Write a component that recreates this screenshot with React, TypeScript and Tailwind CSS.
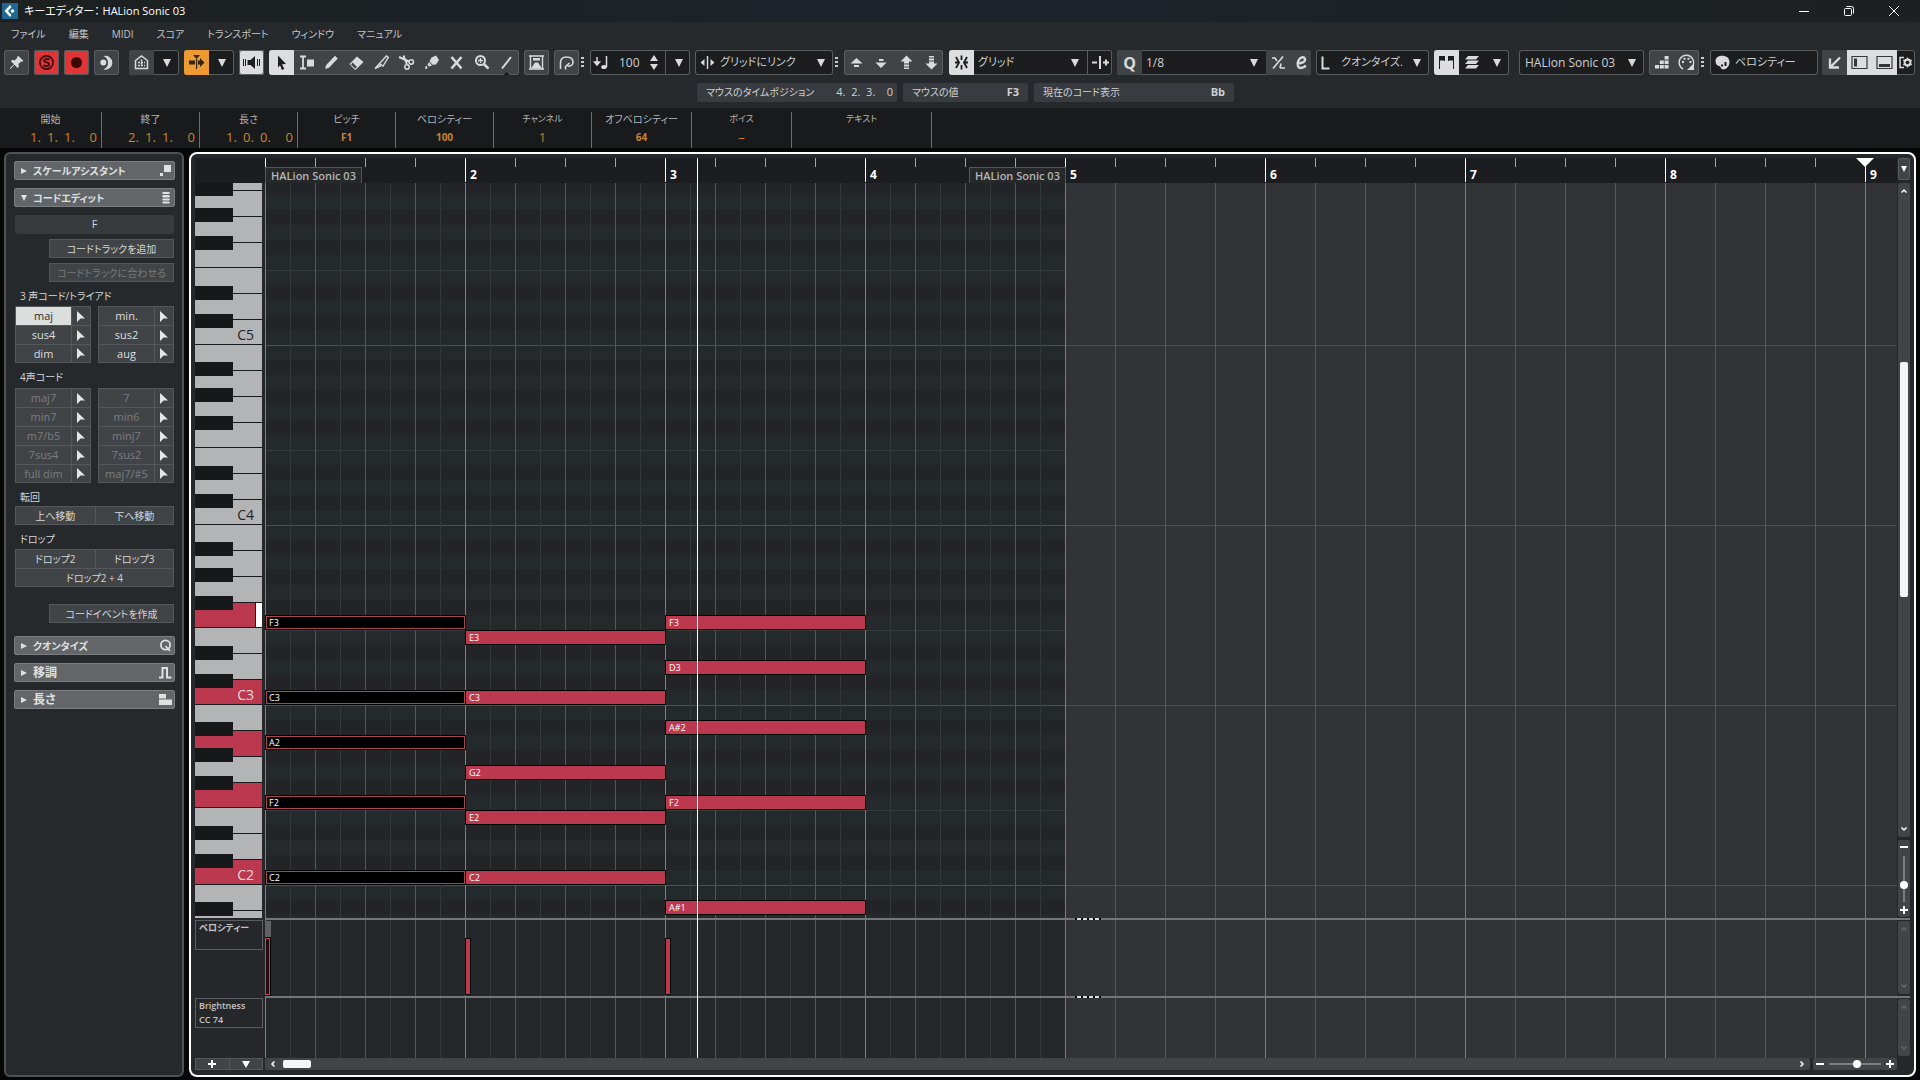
import { useState, type ReactNode } from 'react';

// one semitone row is 15px, one octave 180px, one bar 200px
const ROW = 15;
const BEAT = 50;
const TOP_C = 6;
const OCTAVES = [5, 4, 3, 2, 1];

const WHITE_KEYS = [
  { name: 'B', size: 'h-[26px]' },
  { name: 'A', size: 'h-[26px]' },
  { name: 'G', size: 'h-[26px]' },
  { name: 'F', size: 'h-[25px]' },
  { name: 'E', size: 'h-[26px]' },
  { name: 'D', size: 'h-[26px]' },
  { name: 'C', size: 'h-[25px]' },
];
const BLACK_KEYS = ['top-[17px]', 'top-[43px]', 'top-[71px]', 'top-[121px]', 'top-[149px]'];
const PITCHES = ['B', 'A#', 'A', 'G#', 'G', 'F#', 'F', 'E', 'D#', 'D', 'C#', 'C'];
const PRESSED = ['F3', 'C3', 'A2', 'F2', 'C2'];

const NOTES = [
  { bar: 0, selected: true, pitches: ['F3', 'C3', 'A2', 'F2', 'C2'] },
  { bar: 1, selected: false, pitches: ['E3', 'C3', 'G2', 'E2', 'C2'] },
  { bar: 2, selected: false, pitches: ['F3', 'D3', 'A#2', 'F2', 'A#1'] },
];

const MENU = ['ファイル', '編集', 'MIDI', 'スコア', 'トランスポート', 'ウィンドウ', 'マニュアル'];

const TRIADS = ['maj', 'min.', 'sus4', 'sus2', 'dim', 'aug'];
const SEVENTHS = ['maj7', '7', 'min7', 'min6', 'm7/b5', 'minj7', '7sus4', '7sus2', 'full dim', 'maj7/#5'];

function pitchTop(pitch: string) {
  const octave = Number(pitch.slice(-1));
  const index = PITCHES.indexOf(pitch.slice(0, -1));
  return ((TOP_C - 1 - octave) * 12 + index) * ROW;
}

/* ---------- toolbar ---------- */

function Icon({ children }: { children: ReactNode }) {
  return (
    <svg viewBox="0 0 25 25" width="25" height="25" fill="currentColor" className="shrink-0" aria-hidden="true">
      {children}
    </svg>
  );
}

function Tool({ label, className = '', children }: { label: string; className?: string; children: ReactNode }) {
  return (
    <button aria-label={label} className={`flex h-full w-[25px] shrink-0 items-center justify-center overflow-hidden ${className}`}>
      {children}
    </button>
  );
}

function Group({ className = '', children }: { className?: string; children: ReactNode }) {
  return (
    <div className={`flex h-[25px] shrink-0 items-center overflow-hidden rounded-[3px] text-[#d9dadb] ring-1 ring-inset ring-[#5a5d60] ${className}`}>
      {children}
    </div>
  );
}

function Down() {
  return (
    <svg viewBox="0 0 25 25" width="25" height="25" fill="currentColor" className="pointer-events-none shrink-0" aria-hidden="true">
      <path d="M9 9h8l-4 8z" />
    </svg>
  );
}

function Dots() {
  return (
    <svg viewBox="0 0 11 25" width="11" height="25" fill="#c9cacb" className="-ml-[5px] shrink-0" aria-hidden="true">
      <path d="M2 7h3v2H2zM2 11h3v2H2zM2 15h3v2H2z" />
    </svg>
  );
}

function Picker({ label, value, className = 'text-[11px]' }: { label: string; value: string; className?: string }) {
  return (
    <select aria-label={label} className={`h-full min-w-0 flex-1 appearance-none bg-transparent text-[#cfd0d1] outline-none ${className}`}>
      <option>{value}</option>
    </select>
  );
}

function Toolbar() {
  const [tempo, setTempo] = useState('100');

  return (
    <div className="flex h-[33px] items-center overflow-hidden pl-1">
      <Group className="mr-[5px] bg-[#414447]">
        <Tool label="ピン">
          <Icon><path d="M14.500 6l5 5-1.500.8-1-.3-2.500 2.500.3 2.700-1.200 1.200-3.100-3.100L6.500 19l-.7-.7 4.200-4-3.100-3.100 1.200-1.200 2.700.3 2.500-2.500-.3-1z" /></Icon>
        </Tool>
      </Group>
      <Group className="mr-[5px] bg-[#e03437]">
        <Tool label="ソロ" className="text-[#3a0809]">
          <Icon>
            <circle cx="12.500" cy="12.500" r="6.600" fill="none" stroke="currentColor" strokeWidth="1.600" />
            <path d="M15.300 9.800c-.8-1-5.300-1.300-5.300.8 0 2.300 5.200 1.400 5.200 3.800 0 2.100-4.500 2-5.500.7" fill="none" stroke="currentColor" strokeWidth="1.800" />
          </Icon>
        </Tool>
      </Group>
      <Group className="mr-[5px] bg-[#e03437]">
        <Tool label="録音" className="text-[#3a0809]">
          <Icon><circle cx="12.500" cy="12.500" r="5.500" /></Icon>
        </Tool>
      </Group>
      <Group className="mr-[5px] bg-[#414447]">
        <Tool label="レトロスペクティブ録音">
          <Icon>
            <circle cx="9.300" cy="12.500" r="3" />
            <path d="M9.500 6a7 7 0 1 1 0 13.500c3-1.200 4.500-3.700 4.500-6.700s-1.500-5.500-4.500-6.800z" />
          </Icon>
        </Tool>
      </Group>
      <Group className="ml-[5px] mr-[5px] bg-[#1b1d1f]">
        <Tool label="編集モード" className="bg-[#414447]">
          <Icon>
            <path d="M6.500 18.500v-8l6-4.500 6 4.500v8z" fill="none" stroke="currentColor" strokeWidth="1.500" />
            <path d="M9 12.500h7M12.500 9.500v6M9 15.500h7" stroke="currentColor" strokeWidth="1.500" strokeDasharray="2 1" />
          </Icon>
        </Tool>
        <Tool label="編集モードを開く"><Down /></Tool>
      </Group>
      <Group className="mr-[5px] bg-[#1b1d1f]">
        <Tool label="オートスクロール" className="bg-[#ee9a32] text-[#33250f]">
          <Icon><path d="M5 10.500h6v4H5zM14 10.500h2V8l4.500 4.500L16 17v-2.500h-2zM12 9h1.200v10H12zM9 5h7l-3.500 4z" /></Icon>
        </Tool>
        <Tool label="オートスクロール設定"><Down /></Tool>
      </Group>
      <Group className="mr-[5px] bg-[#dcddde]">
        <Tool label="試聴" className="text-[#1b1d1f]">
          <Icon>
            <path d="M8.500 10h3L16 6v13l-4.500-4h-3z" />
            <path d="M4.500 9v7M6.500 9v7M18.500 9v7M20.500 9v7" stroke="currentColor" strokeWidth="1" />
          </Icon>
        </Tool>
      </Group>
      <Group className="mr-[5px] bg-[#414447]">
        <Tool label="オブジェクト選択" className="bg-[#dcddde] text-[#1b1d1f]">
          <Icon><path d="M9 5.500l8 8.500-4 .3 2.300 4.700-2.300 1-2-4.700-2 2.200z" /></Icon>
        </Tool>
        <Tool label="範囲選択">
          <Icon>
            <path d="M6 6.500h6M6 18.500h6M9 6.500v12" fill="none" stroke="currentColor" strokeWidth="1.800" />
            <path d="M13 9.500h7v7h-7z" />
          </Icon>
        </Tool>
        <Tool label="鉛筆">
          <Icon><path d="M6 19l1.200-4L16 5.800l2.800 2.700L10 17.700z" /></Icon>
        </Tool>
        <Tool label="消しゴム">
          <Icon>
            <path d="M5.500 14L13 6.500l6.500 5.500-7.500 7.500h-1.500z" />
            <path d="M8.500 12.500l4.500 4.500-2 1.500-4-4z" fill="#414447" />
          </Icon>
        </Tool>
        <Tool label="トリム">
          <Icon><path d="M6 18.500L17.500 6l1.800 1.500-5.300 8.500-3-2M6 18.500l6-3" fill="none" stroke="currentColor" strokeWidth="1.400" /></Icon>
        </Tool>
        <Tool label="はさみ">
          <Icon>
            <path d="M5 7l10 4.500M9.500 5.500l3.500 9" fill="none" stroke="currentColor" strokeWidth="2" />
            <circle cx="17.300" cy="12" r="2.200" fill="none" stroke="currentColor" strokeWidth="1.500" />
            <circle cx="13" cy="17" r="2.200" fill="none" stroke="currentColor" strokeWidth="1.500" />
          </Icon>
        </Tool>
        <Tool label="のり">
          <Icon><path d="M12.500 7.500L17 5.500l3 4.500-3 4.500-3.500.3-3-3.500zM10 12l3 3.500-3 1-1.500-1.800zM7.500 15.500c1 1.300 1.300 3-.2 3.500-1.500 0-1.800-1.500.2-3.500z" /></Icon>
        </Tool>
        <Tool label="ミュート">
          <Icon><path d="M7.500 7l10 11.500M17.500 7l-10 11.500" stroke="currentColor" strokeWidth="2.600" /></Icon>
        </Tool>
        <Tool label="ズーム">
          <Icon>
            <circle cx="11.500" cy="10.500" r="4.500" fill="none" stroke="currentColor" strokeWidth="2" />
            <path d="M14.800 14l4.700 4.700" stroke="currentColor" strokeWidth="2.600" />
            <path d="M9 10.500h5M11.500 8v5" stroke="currentColor" strokeWidth="1.300" />
          </Icon>
        </Tool>
        <Tool label="ライン">
          <Icon>
            <path d="M8 18.500L17 7" stroke="currentColor" strokeWidth="2" />
            <path d="M9.500 25l3-3 3 3z" fill="#17181a" />
          </Icon>
        </Tool>
      </Group>
      <Group className="mr-[5px] bg-[#414447]">
        <Tool label="インデペンデントトラックループ">
          <Icon>
            <path d="M5 6h15M5 19h15M6.500 6v13M18.500 6v13" fill="none" stroke="currentColor" strokeWidth="1.400" />
            <path d="M7 18.500l4-6h3l4 6zM9 8h7v2.500H9z" />
          </Icon>
        </Tool>
      </Group>
      <Group className="mr-[5px] bg-[#414447]">
        <Tool label="フィードバック">
          <Icon><path d="M6.500 19v-6c0-4 2-6 6-6s6.500 2 6.500 5.200c0 2.800-2 4-5.500 4M15.500 13l-4 3.500v3" fill="none" stroke="currentColor" strokeWidth="1.600" /></Icon>
        </Tool>
      </Group>
      <Dots />

      <Group className="mr-[5px] w-[100px] bg-[#1b1d1f]">
        <Icon>
          <path d="M7 7v7M4.500 12l2.500 3 2.500-3z" stroke="currentColor" strokeWidth="1.500" />
          <path d="M16.500 6v11" stroke="currentColor" strokeWidth="1.500" />
          <ellipse cx="14" cy="17" rx="2.800" ry="2" />
        </Icon>
        <input
          aria-label="挿入ベロシティー"
          value={tempo}
          onChange={(e) => setTempo(e.target.value)}
          className="h-full w-[30px] bg-transparent pl-1 text-[12px] text-[#cfd0d1] outline-none"
        />
        <svg viewBox="0 0 20 25" width="20" height="25" fill="currentColor" className="shrink-0" aria-hidden="true">
          <path d="M5 11l4-6 4 6zM5 14h8l-4 6z" />
        </svg>
        <Tool label="ベロシティー設定" className="border-l border-[#5a5d60]"><Down /></Tool>
      </Group>
      <Group className="mr-[5px] w-[138px] bg-[#1b1d1f]">
        <Icon>
          <path d="M12.500 6v13" stroke="currentColor" strokeWidth="1.400" />
          <path d="M9.500 9v7l-4-3.500zM15.500 9v7l4-3.500z" />
        </Icon>
        <Picker label="ナッジ設定" value="グリッドにリンク" />
        <Down />
      </Group>
      <Dots />

      <Group className="mr-[6px] w-[99px] bg-[#414447]">
        <Tool label="上へ移動"><Icon><path d="M6.500 13.500l6-5.500 6 5.500zM10 15h5v2h-5z" /></Icon></Tool>
        <Tool label="下へ移動"><Icon><path d="M6.500 12.500h11l-5.500 5.500zM10 9h4.500v2H10z" /></Icon></Tool>
        <Tool label="1オクターブ上へ"><Icon><path d="M6.500 11.500l6-6 6 6h-3.500v2h-5v-2zM10 14.500h5v2h-5zM10 17.500h5v1.500h-5z" /></Icon></Tool>
        <Tool label="1オクターブ下へ"><Icon><path d="M6.500 13.500l6 6 6-6h-3.500v-2h-5v2zM10 8.500h5v2h-5zM10 6h5v1.500h-5z" /></Icon></Tool>
      </Group>
      <Group className="mr-[5px] w-[163px] bg-[#1b1d1f]">
        <Tool label="スナップ" className="bg-[#dcddde] text-[#1b1d1f]">
          <Icon><path d="M12.500 5.500v4.500M12.500 15v4.500M7 7l3 5.500-3 5.500M18 7l-3 5.500 3 5.500M6 12.500h3M16 12.500h3" fill="none" stroke="currentColor" strokeWidth="1.800" /></Icon>
        </Tool>
        <Picker label="スナップタイプ" value="グリッド" className="pl-1 text-[11px]" />
        <Down />
        <Tool label="ゼロクロス" className="border-l border-[#5a5d60]">
          <Icon><path d="M4 12.500h5M12 6v13M15 12.500h6M18 9.500v6" stroke="currentColor" strokeWidth="2" /></Icon>
        </Tool>
      </Group>
      <Group className="mr-[5px] w-[194px] bg-[#1b1d1f]">
        <span className="flex h-full w-[25px] shrink-0 items-center justify-center bg-[#414447] text-[16px] font-bold">Q</span>
        <Picker label="クオンタイズ値" value="1/8" className="pl-1 text-[12px]" />
        <Down />
        <div className="flex h-full w-[45px] shrink-0 items-center bg-[#414447]">
          <Tool label="反復クオンタイズ">
            <Icon><path d="M7 18.500L17 6.500M6 8h3l2 3M14 18h5M15 13.500l-1 4.500" fill="none" stroke="currentColor" strokeWidth="1.700" /></Icon>
          </Tool>
          <Tool label="クオンタイズパネル">
            <Icon><path d="M5.500 13.500c5 0 9-1.500 8.500-4.500-.5-2.500-4.500-2.500-6.500 1.500-2 4.500-.5 7.500 2.500 7.500 2 0 3.700-1 4.800-2.500" fill="none" stroke="currentColor" strokeWidth="2.400" /></Icon>
          </Tool>
        </div>
      </Group>
      <Group className="mr-[5px] w-[113px] bg-[#1b1d1f]">
        <Icon><path d="M6.500 6.500v12h7" fill="none" stroke="currentColor" strokeWidth="2" /></Icon>
        <Picker label="長さクオンタイズ" value="クオンタイズ." />
        <Down />
      </Group>
      <Group className="mr-[10px] bg-[#1b1d1f]">
        <Tool label="コントローラー範囲" className="bg-[#dcddde] text-[#1b1d1f]">
          <Icon>
            <path d="M5 6h6v4.500H5zM14 6h6v4.500h-6z" />
            <path d="M5.500 10v9M10.500 6v5M14.500 6v5M19.500 10v9" stroke="currentColor" strokeWidth="1" />
          </Icon>
        </Tool>
        <Tool label="パート編集モード">
          <Icon><path d="M9 6h11l-3 3.500H6zM9 10.500h11l-3 3.500H6zM9 15h11l-3 3.500H6z" /></Icon>
        </Tool>
        <Tool label="パート編集を開く"><Down /></Tool>
      </Group>
      <Group className="mr-[5px] w-[125px] bg-[#1b1d1f] pl-1">
        <Picker label="編集中のパート" value="HALion Sonic 03" className="pl-0.5 text-[12px]" />
        <Down />
      </Group>
      <Group className="mr-[5px] bg-[#414447]">
        <Tool label="ステップ入力">
          <Icon><path d="M6 15h4v3.500H6zM10.800 15h4v3.500h-4zM15.600 15h4v3.500h-4zM10.800 10.500h4V14h-4zM15.600 10.500h4V14h-4zM15.600 6h4v3.500h-4z" /></Icon>
        </Tool>
        <Tool label="MIDI入力">
          <Icon>
            <path d="M9 19a7.300 7.300 0 1 1 10.500-5" fill="none" stroke="currentColor" strokeWidth="1.500" />
            <path d="M8 11h2v2H8zM9.500 7.800h2v2h-2zM13.500 7.800h2v2h-2zM15.500 11h2v2h-2zM20 13v7h-7z" />
          </Icon>
        </Tool>
      </Group>
      <Dots />
      <Group className="mr-1 w-[108px] bg-[#1b1d1f]">
        <Icon>
          <path d="M5.500 11c0-7 14-7 14 1 0 4-3 7.500-6.500 7.500-2 0-2-3-4-3.500-2-.3-3.500-2-3.500-5z" />
          <path d="M11 14.500h2v2h-2zM14.500 12h2v4h-2z" fill="#1b1d1f" />
        </Icon>
        <Picker label="イベントカラー" value="ベロシティー" />
      </Group>
      <Group className="bg-[#1b1d1f]">
        <Tool label="下ゾーンで開く" className="bg-[#414447]">
          <Icon><path d="M18 7.500l-9 9M8 8.500v9h9" fill="none" stroke="currentColor" strokeWidth="2.300" /></Icon>
        </Tool>
        <Tool label="左ゾーン" className="bg-[#dcddde] text-[#34373a]">
          <Icon>
            <path d="M5 6.500h15v12H5z" fill="none" stroke="currentColor" strokeWidth="1.200" />
            <path d="M7 8.500h3v8H7z" />
          </Icon>
        </Tool>
        <Tool label="下ゾーン" className="bg-[#dcddde] text-[#34373a]">
          <Icon>
            <path d="M5 6.500h15v12H5z" fill="none" stroke="currentColor" strokeWidth="1.200" />
            <path d="M7 14h11v3H7z" />
          </Icon>
        </Tool>
        <button aria-label="ウィンドウ設定" className="h-full w-[18px]">
          <svg viewBox="0 0 18 25" width="18" height="25" fill="none" stroke="#d9dadb" aria-hidden="true">
            <path d="M7 7.500H3v10h4" strokeWidth="1.500" />
            <circle cx="10.500" cy="12.500" r="3" strokeWidth="2" />
            <path d="M10.500 7.500v10M6.300 10l8.400 5M6.300 15l8.400-5" strokeWidth="1.300" />
            <circle cx="10.500" cy="12.500" r="1.800" fill="#1b1d1f" stroke="none" />
          </svg>
        </button>
      </Group>
    </div>
  );
}

function StatusLine() {
  return (
    <div className="flex h-[25px] gap-[6px] pl-[697px] text-[10px] text-[#cfd0d1]">
      <div className="flex h-[19px] w-[200px] items-center justify-between rounded-xs bg-[#383b3f] pl-[9px] pr-1">
        <span>マウスのタイムポジション</span>
        <span className="whitespace-pre text-[11px]">4.  2.  3.    0</span>
      </div>
      <div className="flex h-[19px] w-[125px] items-center justify-between rounded-xs bg-[#383b3f] pl-[9px] pr-[9px]">
        <span>マウスの値</span>
        <b className="text-[11px]">F3</b>
      </div>
      <div className="flex h-[19px] w-[200px] items-center justify-between rounded-xs bg-[#383b3f] px-[9px]">
        <span>現在のコード表示</span>
        <b className="text-[11px]">Bb</b>
      </div>
    </div>
  );
}

function Position({ parts }: { parts: string[] }) {
  return (
    <span className="flex w-full justify-end pr-1 text-[13px] font-medium">
      {parts.map((part, i) => (
        <span key={i} className={i === 3 ? 'w-4 text-right' : 'w-[17px]'}>{part}</span>
      ))}
    </span>
  );
}

function InfoLine() {
  const cell = 'flex flex-col items-center justify-between border-r border-[#6c6e70]';
  return (
    <dl className="flex h-10 w-full bg-[#191a1b] pt-1 text-[10px] leading-[14px] text-[#b4b5b6] [&_dd]:h-[20px] [&_dd]:leading-[18px] [&_dd]:text-[#c8832f]">
      <div className={`${cell} w-[102px]`}><dt>開始</dt><dd className="w-full"><Position parts={['1.', '1.', '1.', '0']} /></dd></div>
      <div className={`${cell} w-[98px]`}><dt>終了</dt><dd className="w-full"><Position parts={['2.', '1.', '1.', '0']} /></dd></div>
      <div className={`${cell} w-[98px]`}><dt>長さ</dt><dd className="w-full"><Position parts={['1.', '0.', '0.', '0']} /></dd></div>
      <div className={`${cell} w-[98px]`}><dt>ピッチ</dt><dd className="font-bold">F1</dd></div>
      <div className={`${cell} w-[98px]`}><dt>ベロシティー</dt><dd className="font-bold">100</dd></div>
      <div className={`${cell} w-[98px]`}><dt className="text-[9px]">チャンネル</dt><dd className="text-[13px]">1</dd></div>
      <div className={`${cell} w-[100px]`}><dt>オフベロシティー</dt><dd className="font-bold">64</dd></div>
      <div className={`${cell} w-[100px]`}><dt className="text-[9px]">ボイス</dt><dd className="text-[13px]">–</dd></div>
      <div className={`${cell} w-[140px]`}><dt className="text-[9px]">テキスト</dt><dd /></div>
    </dl>
  );
}

/* ---------- inspector ---------- */

function SectionHeader({ title, size = 'text-[10px]', open = false, children }: { title: string; size?: string; open?: boolean; children: ReactNode }) {
  return (
    <button
      aria-expanded={open}
      className="flex h-[19px] w-full items-center rounded-xs border border-[#7b7e80] bg-[#636668] pl-[5px] pr-[2px] text-left font-bold text-[#dfe0e0]"
    >
      <svg viewBox="0 0 8 8" width="8" height="8" fill="currentColor" aria-hidden="true">
        {open ? <path d="M1 1h6L4 7z" /> : <path d="M1 1l6 3-6 3z" />}
      </svg>
      <span className={`ml-[5px] flex-1 leading-4 ${size}`}>{title}</span>
      <svg viewBox="0 0 13 13" width="13" height="13" fill="currentColor" aria-hidden="true">{children}</svg>
    </button>
  );
}

const panelButton = 'flex h-[19px] items-center justify-center border border-[#55585b] bg-[#414447] text-[10px] leading-none';

function ChordGrid({ chords, disabled = false }: { chords: string[]; disabled?: boolean }) {
  return (
    <div className="mx-px grid grid-cols-2 gap-x-[7px]">
      {chords.map((chord) => (
        <div key={chord} className="flex h-[19px] border border-b-0 border-[#55585b] bg-[#414447] nth-last-[-n+2]:border-b">
          <button
            disabled={disabled}
            className={`flex-1 text-[11px] leading-4 ${chord === 'maj' ? 'bg-[#dcdddd] text-[#2b2d2f]' : disabled ? 'text-[#7b7d80]' : 'text-[#dcddde]'}`}
          >
            {chord}
          </button>
          <button aria-label={`${chord} を適用`} className="flex w-[19px] items-center justify-center border-l border-[#55585b]">
            <svg viewBox="0 0 8 11" width="8" height="11" fill="#e6e6e7" aria-hidden="true">
              <path d="M0 0l8 7.500H3.500L0 11z" />
            </svg>
          </button>
        </div>
      ))}
    </div>
  );
}

function Inspector() {
  return (
    <aside className="flex w-[180px] shrink-0 flex-col rounded-md border-2 border-[#505355] bg-[#25292c] pl-2 pr-[7px] pt-[7px] text-[11px] text-[#d4d5d6]">
      <SectionHeader title="スケールアシスタント"><path d="M5 1h7v7H5zM1 9h3v3H1z" /></SectionHeader>
      <div className="h-2 shrink-0" />
      <SectionHeader title="コードエディット" open><path d="M4 1h6l1 1-1 1H4L3 2zM4 4h6l1 1-1 1.500H4L3 5zM4 7.500h6l1 1-1 1H4l-1-1zM4 10.500h6l1 1-1 1H4l-1-1z" /></SectionHeader>
      <div className="mx-px mt-2 flex h-[19px] items-center justify-center rounded-xs bg-[#383b3e]">F</div>
      <button className={`${panelButton} ml-[35px] mr-px mt-[5px]`}>コードトラックを追加</button>
      <button disabled className={`${panelButton} ml-[35px] mr-px mt-[5px] text-[#77797c]`}>コードトラックに合わせる</button>

      <h3 className="ml-[6px] mt-[5px] h-[19px] text-[10px] leading-[19px]">3 声コード/トライアド</h3>
      <ChordGrid chords={TRIADS} />
      <h3 className="ml-[6px] mt-[5px] h-[20px] text-[10px] leading-[19px]">4声コード</h3>
      <ChordGrid chords={SEVENTHS} disabled />

      <h3 className="ml-[6px] mt-[5px] h-[18px] text-[10px] leading-[19px]">転回</h3>
      <div className="mx-px grid grid-cols-2">
        <button className={`${panelButton} border-r-0`}>上へ移動</button>
        <button className={panelButton}>下へ移動</button>
      </div>
      <h3 className="ml-[6px] mt-[5px] h-[19px] text-[10px] leading-[19px]">ドロップ</h3>
      <div className="mx-px grid grid-cols-2">
        <button className={`${panelButton} border-b-0 border-r-0`}>ドロップ2</button>
        <button className={`${panelButton} border-b-0`}>ドロップ3</button>
        <button className={`${panelButton} col-span-2`}>ドロップ2 + 4</button>
      </div>
      <button className={`${panelButton} mb-[13px] ml-[35px] mr-px mt-[17px]`}>コードイベントを作成</button>

      <div className="flex flex-col gap-2">
        <SectionHeader title="クオンタイズ">
          <circle cx="6.500" cy="6" r="4.600" fill="none" stroke="currentColor" strokeWidth="1.800" />
          <path d="M6.500 7l4.500 5" stroke="currentColor" strokeWidth="1.800" />
        </SectionHeader>
        <SectionHeader title="移調" size="text-[12px]"><path d="M0 11.500h3.500V2h4.500v9.500h4.500" fill="none" stroke="currentColor" strokeWidth="2" /></SectionHeader>
        <SectionHeader title="長さ" size="text-[12px]"><path d="M0 1h7v4.500H0zM0 6.500h13V12H0z" /></SectionHeader>
      </div>
    </aside>
  );
}

/* ---------- editor ---------- */

function Keyboard() {
  return (
    <div className="w-[67px] shrink-0 overflow-hidden bg-[#1b1d1f]">
      <div className="-mt-[18px]">
        {OCTAVES.map((octave) => (
          <div key={octave} className="relative">
            {WHITE_KEYS.map(({ name, size }) => {
              const key = `${name}${octave}`;
              const pressed = PRESSED.includes(key);
              return (
                <div
                  key={key}
                  className={`flex items-end justify-end border-b border-[#1a1b1d] text-[14px] ${size} ${pressed ? 'bg-[#bb384e] text-[#f0d5d9]' : 'bg-[#b3b4b6] text-[#232427]'}`}
                >
                  {name === 'C' && octave > 1 && <span className="pr-2 leading-[18px]">{key}</span>}
                  {key === 'F3' && <span className="h-full w-[7px] border-l border-[#1a1b1d] bg-white" />}
                </div>
              );
            })}
            {BLACK_KEYS.map((top) => (
              <div key={top} className={`absolute left-0 h-[14px] w-[38px] bg-[#17181a] ${top}`} />
            ))}
          </div>
        ))}
      </div>
    </div>
  );
}

function BarLines() {
  return (
    <>
      <div className="absolute inset-y-0 left-0 w-[800px] bg-[repeating-linear-gradient(90deg,#34383b_0_1px,transparent_1px_25px)]" />
      <div className="absolute inset-0 bg-[repeating-linear-gradient(90deg,#7b7d7f_0_1px,transparent_1px_200px),repeating-linear-gradient(90deg,#55585a_0_1px,transparent_1px_50px)]" />
    </>
  );
}

function NoteGrid() {
  return (
    <div className="relative min-w-0 flex-1 overflow-hidden bg-[#323336]">
      <div className="absolute inset-x-0 -top-[18px]">
        {OCTAVES.map((octave) => (
          <div key={octave}>
            {PITCHES.map((pitch) => (
              <div key={pitch} className={`h-[15px] ${pitch === 'B' ? 'border-t border-[#4d5153]' : ''}`}>
                <div
                  className={`w-[800px] ${pitch === 'B' ? 'h-[14px]' : 'h-[15px]'} ${pitch.includes('#') ? 'bg-[#222427]' : 'bg-[#24292b]'} ${pitch === 'E' ? 'border-t border-[#363b3d]' : ''}`}
                />
              </div>
            ))}
          </div>
        ))}
      </div>
      <BarLines />
      <div className="absolute inset-x-0 -top-[18px]">
        {NOTES.map(({ bar, selected, pitches }) =>
          pitches.map((pitch) => (
            <div
              key={`${bar}-${pitch}`}
              style={{ left: bar * BEAT * 4, top: pitchTop(pitch) }}
              className={`absolute h-[15px] w-[201px] border border-black pl-[3px] text-[9px] font-medium leading-[13px] text-white ${selected ? 'bg-black ring-1 ring-inset ring-[#a8474f]' : 'bg-[#bb384e]'}`}
            >
              {pitch}
            </div>
          ))
        )}
      </div>
    </div>
  );
}

function Ruler() {
  return (
    <div className="relative h-[25px] min-w-0 flex-1 overflow-hidden bg-[#1c1d20]">
      {Array.from({ length: 33 }, (_, i) => (
        <div
          key={i}
          style={{ left: i * BEAT }}
          className={`absolute top-0 w-px ${i % 4 === 0 ? 'h-6 bg-white' : 'h-[9px] bg-[#a5a6a7]'}`}
        >
          {i % 4 === 0 && i > 0 && (
            <span className="absolute left-[5px] top-[9px] text-[12px] font-bold leading-4 text-white">{i / 4 + 1}</span>
          )}
        </div>
      ))}
      <span className="absolute left-0 top-[9px] h-4 w-[97px] border border-b-0 border-[#55585a] bg-[#26282a] text-center text-[11px] font-semibold leading-[15px] text-[#b4b5b6]">
        HALion Sonic 03
      </span>
      <span className="absolute left-[704px] top-[9px] h-4 w-[97px] border border-b-0 border-[#55585a] bg-[#26282a] text-center text-[11px] font-semibold leading-[15px] text-[#b4b5b6]">
        HALion Sonic 03
      </span>
      <svg viewBox="0 0 18 9" width="18" height="9" fill="white" className="absolute left-[1591px] top-0" aria-hidden="true">
        <path d="M0 0h18L9 9z" />
      </svg>
    </div>
  );
}

function Chevron({ up = false }: { up?: boolean }) {
  return (
    <svg viewBox="0 0 8 8" width="8" height="8" fill="none" stroke="currentColor" strokeWidth="1.500" aria-hidden="true">
      {up ? <path d="M1.500 5.500L4 3l2.500 2.500" /> : <path d="M1.500 2.500L4 5l2.500-2.500" />}
    </svg>
  );
}

function Sign({ plus = false }: { plus?: boolean }) {
  return (
    <svg viewBox="0 0 8 8" width="8" height="8" stroke="white" strokeWidth="2" aria-hidden="true">
      <path d={plus ? 'M0 4h8M4 0v8' : 'M0 4h8'} />
    </svg>
  );
}

function LaneScroll() {
  return (
    <div className="mb-[2px] ml-px mt-px flex w-3 shrink-0 flex-col items-center justify-between rounded-xs bg-[#434447] py-1 text-[#66686b]">
      <Chevron up />
      <Chevron />
    </div>
  );
}

function Divider() {
  return (
    <div className="ml-[70px] flex h-[2px] shrink-0 items-center justify-center bg-[#747678]">
      <div className="flex h-[2px] w-[26px] justify-center gap-[2px] bg-black">
        {[0, 1, 2, 3].map((i) => (
          <span key={i} className="h-[2px] w-1 bg-[#dcddde]" />
        ))}
      </div>
    </div>
  );
}

function Lane({ label, height, bars }: { label: ReactNode; height: string; bars?: boolean }) {
  return (
    <div className={`flex shrink-0 ${height}`}>
      <div className="mr-[2px] w-[68px] shrink-0">
        <button className="flex h-[30px] w-full items-start border border-[#5a5d5f] px-[3px] text-left text-[9px] font-semibold leading-[14px] text-[#c3c4c5]">
          {label}
        </button>
      </div>
      <div className="relative flex min-w-0 flex-1 overflow-hidden bg-[#323336]">
        <div className="w-[800px] bg-[#25282b]" />
        <BarLines />
        {bars && (
          <>
            <div className="absolute left-0 top-px h-[17px] w-[6px] bg-[#5f6163]" />
            <div className="absolute bottom-px left-0 h-[57px] w-[5px] border border-[#c4495c] bg-[#2a080d] outline-1 outline-black" />
            <div className="absolute bottom-px left-[200px] h-[57px] w-[6px] border border-black bg-[#bb384e]" />
            <div className="absolute bottom-px left-[400px] h-[57px] w-[6px] border border-black bg-[#bb384e]" />
          </>
        )}
      </div>
      <LaneScroll />
    </div>
  );
}

const range = 'appearance-none bg-transparent [&::-webkit-slider-thumb]:size-2 [&::-webkit-slider-thumb]:appearance-none [&::-webkit-slider-thumb]:rounded-full [&::-webkit-slider-thumb]:bg-white';

function Editor() {
  const [zoomX, setZoomX] = useState(54);
  const [zoomY, setZoomY] = useState(66);

  return (
    <main className="flex min-w-0 flex-1 flex-col rounded-lg border-2 border-white bg-[#25272a] pb-[5px] pl-1 pr-1 pt-1">
      <div className="relative flex flex-1 flex-col">
        <div className="flex shrink-0">
          <div className="w-[70px] shrink-0 bg-[#1c1d20]" />
          <Ruler />
          <button aria-label="ルーラー表示形式" className="ml-px flex h-[22px] w-3 shrink-0 items-center justify-center rounded-xs border border-[#5a5d5f] bg-[#414447]">
            <svg viewBox="0 0 8 8" width="8" height="8" fill="white" aria-hidden="true"><path d="M1 1h6L4 7z" /></svg>
          </button>
        </div>

        <div className="flex min-h-0 flex-1 basis-0">
          <Keyboard />
          <div className="w-[3px] shrink-0" />
          <NoteGrid />
          <div className="ml-px flex w-3 shrink-0 flex-col">
            <div className="flex flex-1 flex-col items-center rounded-xs bg-[#434447] py-1 text-white">
              <Chevron up />
              <div className="flex w-2 flex-1 flex-col">
                <div className="grow-[167]" />
                <div className="grow-[235] rounded-xs bg-[#f4f5f7]" />
                <div className="grow-[228]" />
              </div>
              <Chevron />
            </div>
            <div className="mb-px mt-[3px] flex h-[77px] flex-col items-center justify-between rounded-xs bg-[#434447] py-[3px]">
              <Sign />
              <input
                type="range"
                aria-label="垂直ズーム"
                value={zoomY}
                onChange={(e) => setZoomY(Number(e.target.value))}
                className={`${range} h-[46px] w-2 bg-[linear-gradient(90deg,transparent_3px,#7b7d80_3px_5px,transparent_5px)] [writing-mode:vertical-lr]`}
              />
              <Sign plus />
            </div>
          </div>
        </div>

        <Divider />
        <Lane label="ベロシティー" height="h-[76px]" bars />
        <Divider />
        <Lane label={<span>Brightness<br />CC 74</span>} height="h-[60px]" />

        <div className="absolute inset-y-0 left-[502px] w-px bg-white" />
      </div>

      <div className="flex h-3 shrink-0">
        <div className="mr-[2px] flex w-[68px] shrink-0 border border-[#55585b] bg-[#414447]">
          <button aria-label="レーンを追加" className="flex flex-1 items-center justify-center border-r border-[#55585b]"><Sign plus /></button>
          <button aria-label="レーンのプリセット" className="flex flex-1 items-center justify-center">
            <svg viewBox="0 0 8 8" width="8" height="8" fill="white" aria-hidden="true"><path d="M0 1h8L4 8z" /></svg>
          </button>
        </div>
        <div className="flex min-w-0 flex-1 items-center rounded-xs bg-[#434447] px-1 text-white">
          <span className="rotate-90"><Chevron /></span>
          <div className="ml-[6px] h-2 w-7 rounded-xs bg-[#f4f5f7]" />
          <span className="ml-auto -rotate-90"><Chevron /></span>
        </div>
        <div className="ml-[3px] mr-[13px] flex w-[84px] shrink-0 items-center justify-between rounded-xs bg-[#434447] px-[3px]">
          <Sign />
          <input
            type="range"
            aria-label="水平ズーム"
            value={zoomX}
            onChange={(e) => setZoomX(Number(e.target.value))}
            className={`${range} h-2 w-[52px] bg-[linear-gradient(transparent_3px,#7b7d80_3px_5px,transparent_5px)]`}
          />
          <Sign plus />
        </div>
      </div>
    </main>
  );
}

export default function App() {
  return (
    <div className="flex min-h-screen flex-col overflow-hidden bg-[#060707] font-['Open_Sans','Noto_Sans_CJK_JP',sans-serif] [font-feature-settings:'palt']">
      <header className="bg-[#26292c]">
        <div className="flex h-[22px] items-center bg-linear-to-r from-[#1c2020] via-[#1b222a] to-[#1c2020] pl-[2px] text-white">
          <svg viewBox="0 0 16 16" width="16" height="16" aria-hidden="true">
            <path d="M0 0h16v16H0z" fill="#1f6795" />
            <path d="M8 2L2.500 8 8 14l1.500-2L6 8l3.500-4z" fill="white" />
            <circle cx="10.500" cy="8" r="1.800" fill="white" />
          </svg>
          <h1 className="ml-[6px] text-[11px]">キーエディター： HALion Sonic 03</h1>
          <div className="ml-auto flex pr-1">
            <button aria-label="最小化" className="flex w-[45px] justify-center">
              <svg viewBox="0 0 12 12" width="12" height="12" stroke="white" fill="none" aria-hidden="true"><path d="M1 6.500h10" /></svg>
            </button>
            <button aria-label="元に戻す" className="flex w-[45px] justify-center">
              <svg viewBox="0 0 12 12" width="12" height="12" stroke="white" fill="none" aria-hidden="true">
                <rect x="1.500" y="3.500" width="7" height="7" rx="1" />
                <path d="M3.500 1.500h5a2 2 0 0 1 2 2v5" />
              </svg>
            </button>
            <button aria-label="閉じる" className="flex w-[45px] justify-center">
              <svg viewBox="0 0 12 12" width="12" height="12" stroke="white" fill="none" aria-hidden="true"><path d="M1 1l10 10M11 1L1 11" /></svg>
            </button>
          </div>
        </div>
        <nav className="flex h-6 items-center gap-[23px] pl-[11px] text-[10px] text-[#c3c4c5]">
          {MENU.map((item) => (
            <a key={item} href="#">{item}</a>
          ))}
        </nav>
        <Toolbar />
        <div className="h-1" />
        <StatusLine />
      </header>
      <InfoLine />
      <div className="flex flex-1 gap-[5px] px-1 pb-[3px] pt-1">
        <Inspector />
        <Editor />
      </div>
    </div>
  );
}
